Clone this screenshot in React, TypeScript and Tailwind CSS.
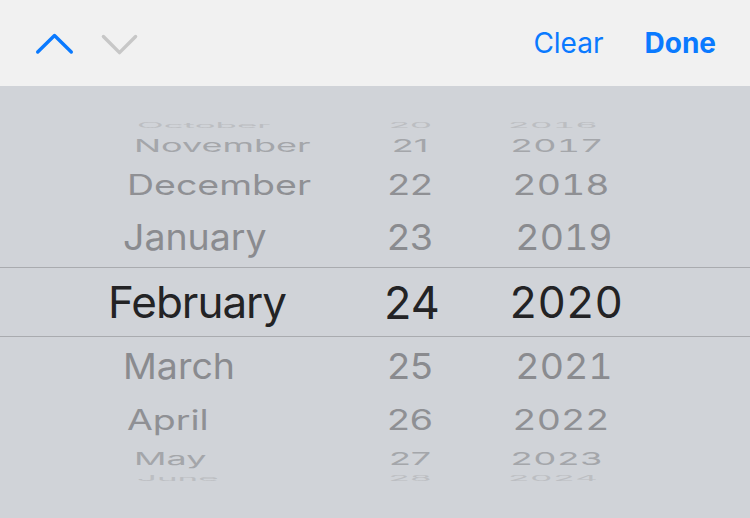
import React from "react";

interface IRow {
  k: number;
  month: string;
  day: number;
  year: number;
}

// rows of the wheel, k = offset from the selected one
const rows: IRow[] = [
  { k: -4, month: "October", day: 20, year: 2016 },
  { k: -3, month: "November", day: 21, year: 2017 },
  { k: -2, month: "December", day: 22, year: 2018 },
  { k: -1, month: "January", day: 23, year: 2019 },
  { k: 0, month: "February", day: 24, year: 2020 },
  { k: 1, month: "March", day: 25, year: 2021 },
  { k: 2, month: "April", day: 26, year: 2022 },
  { k: 3, month: "May", day: 27, year: 2023 },
  { k: 4, month: "June", day: 28, year: 2024 },
];

// how far each ring sits from the lens: height, squash, fade, drift
const rings: Record<number, { h: number; sx: number; sy: number; color: string; mx: number; yx: number }> = {
  1: { h: 59, sx: 1, sy: 0.96, color: "#8a8b8f", mx: 0, yx: 0 },
  2: { h: 47, sx: 1, sy: 0.74, color: "#8f9094", mx: 4, yx: -3 },
  3: { h: 31, sx: 0.96, sy: 0.48, color: "#a4a6aa", mx: 11, yx: -7 },
  4: { h: 9, sx: 0.93, sy: 0.2, color: "#bcbec2", mx: 14, yx: -11 },
};

const font = { fontFamily: "Inter, 'Liberation Sans', sans-serif" };

const ChevronUp = ({ color }: { color: string }) => (
  <svg width="40" height="24" viewBox="0 0 40 24" fill="none">
    <path d="M2.7 20 L19.5 3.5 L36.3 20" stroke={color} strokeWidth="3.4" strokeLinecap="round" strokeLinejoin="round" />
  </svg>
);

const ChevronDown = ({ color }: { color: string }) => (
  <svg width="40" height="24" viewBox="0 0 40 24" fill="none">
    <path d="M3.4 4.5 L19.5 20.6 L35.6 4.5" stroke={color} strokeWidth="3.4" strokeLinecap="round" strokeLinejoin="round" />
  </svg>
);

const WheelRow = ({ row }: { row: IRow }) => {
  const r = rings[Math.abs(row.k)];
  const t = (dx: number) => ({
    color: r.color,
    transform: `translateX(${dx}px) scale(${r.sx}, ${r.sy * r.sx})`,
  });
  return (
    <div className="flex items-center w-full" style={{ height: r.h }}>
      <div className="w-[360px] pl-[123px] flex">
        <span className="block leading-none text-[37.5px] origin-left" style={t(r.mx)}>
          {row.month}
        </span>
      </div>
      <div className="w-[100px] flex justify-center">
        <span className="block leading-none text-[37.5px]" style={t(0)}>
          {row.day}
        </span>
      </div>
      <div className="w-[208px] flex justify-center">
        <span className="block leading-none text-[37.5px] tabular-nums" style={t(r.yx)}>
          {row.year}
        </span>
      </div>
    </div>
  );
};

const SelectedRow = ({ row }: { row: IRow }) => (
  <div className="flex items-center w-full h-[70px] border-y border-[#a9abaf] text-[#232325]">
    <div className="w-[360px] pl-[108px] flex">
      <span className="block leading-none text-[44px] tracking-[-1px]">{row.month}</span>
    </div>
    <div className="w-[100px] flex justify-center pl-[4px]">
      <span className="block leading-none text-[45px]">{row.day}</span>
    </div>
    <div className="w-[208px] flex justify-center pl-[4px]">
      <span className="block leading-none text-[44px] tabular-nums">{row.year}</span>
    </div>
  </div>
);

export default function App() {
  return (
    <div className="w-[750px] h-[518px] overflow-hidden flex flex-col bg-[#d0d3d8]" style={font}>
      <div className="h-[86px] shrink-0 bg-[#f1f1f1] flex items-center justify-between pl-[35px] pr-[34px]">
        <div className="flex items-center gap-[25px] pt-[1px]">
          <ChevronUp color="#0a7aff" />
          <ChevronDown color="#c7c7c7" />
        </div>
        <div className="flex items-center gap-[41px] text-[28px] text-[#0a7aff] leading-none">
          <span>Clear</span>
          <span className="font-bold">Done</span>
        </div>
      </div>
      <div className="flex-1 flex flex-col justify-center overflow-hidden">
        {rows.map((row) =>
          row.k === 0 ? <SelectedRow key={row.k} row={row} /> : <WheelRow key={row.k} row={row} />
        )}
      </div>
    </div>
  );
}
